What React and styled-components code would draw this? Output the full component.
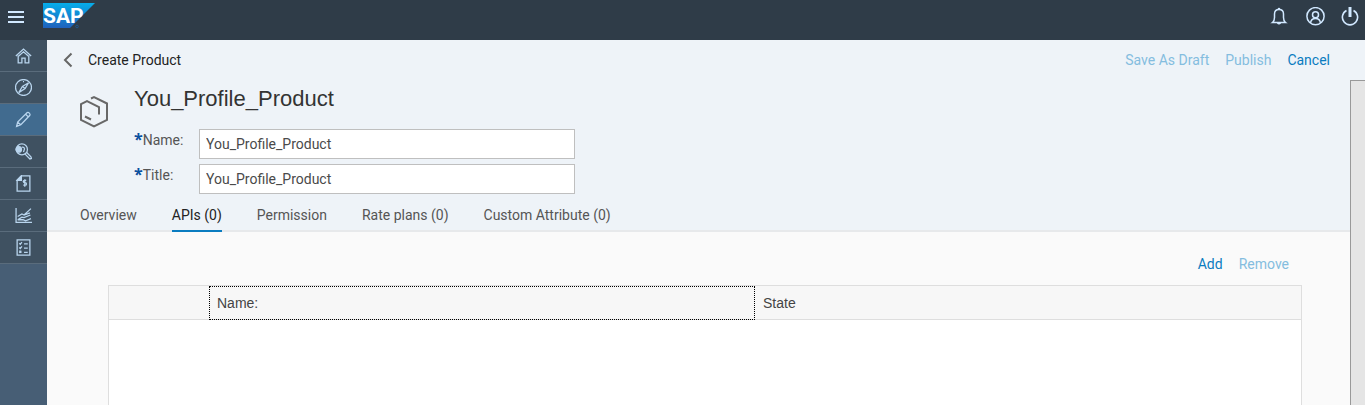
import React, { useState } from "react";
import styled, { createGlobalStyle } from "styled-components";

const GlobalStyle = createGlobalStyle`
  *, *::before, *::after { box-sizing: border-box; }
  body { margin: 0; background: #fafafa; }
  body, button, input { font-family: Roboto, "Liberation Sans", sans-serif; font-size: 14px; }
`;

const Page = styled.div`
  display: flex;
  flex-direction: column;
  min-height: 100vh;
`;

const ShellBar = styled.header`
  display: flex;
  align-items: flex-start;
  height: 40px;
  padding: 3px 6px 0 7px;
  background: #2f3c48;
`;

const ShellActions = styled.div`
  display: flex;
  gap: 16px;
  margin-left: auto;
  padding-top: 4px;
`;

const IconButton = styled.button`
  display: flex;
  padding: 0;
  border: 0;
  background: none;
  color: ${(p) => p.$color || "#d1e8ff"};
  cursor: pointer;
`;

const MenuButton = styled(IconButton)`
  margin: 5px 18px 0 0;
`;

const Icon = styled.svg`
  display: block;
  fill: none;
  stroke: currentColor;
  stroke-width: ${(p) => p.$weight || 1.3};
`;

const Body = styled.div`
  display: flex;
  flex: 1;
`;

const SideNav = styled.nav`
  flex: 0 0 47px;
  background: #475e75;
`;

const NavLink = styled.a`
  display: flex;
  align-items: center;
  justify-content: center;
  height: 32px;
  border-bottom: 1px solid #5a6c7c;
  background: ${(p) => (p.$active ? "#416b8f" : "#3f5161")};
  color: #b9d5ee;
`;

const Main = styled.main`
  display: flex;
  flex: 1;
  flex-direction: column;
  min-width: 0;
`;

const PageBar = styled.div`
  display: flex;
  align-items: center;
  height: 40px;
  padding: 0 35px 0 15px;
  background: #eef3f8;
`;

const PageTitle = styled.span`
  margin-left: 14px;
  color: #222;
`;

const Actions = styled.div`
  display: flex;
  justify-content: flex-end;
  gap: 16px;
  margin-left: auto;
`;

const TextButton = styled.button`
  padding: 0;
  border: 0;
  background: none;
  color: #0a7cc0;
  line-height: 20px;
  &:disabled { color: #84bddf; }
`;

const ScrollArea = styled.div`
  display: flex;
  flex: 1;
`;

const ScrollTrack = styled.div`
  flex: 0 0 15px;
  border: 1px solid #999;
  border-width: 1px 0 0 1px;
  background: #e5e5e5;
`;

const Content = styled.div`
  display: flex;
  flex: 1;
  flex-direction: column;
  min-width: 0;
`;

const ObjectHeader = styled.section`
  background: #eef3f8;
  box-shadow: inset 0 -2px 0 #e7e9eb;
`;

const ObjectSummary = styled.div`
  display: flex;
  gap: 23px;
  padding: 0 32px;
`;

const ObjectIcon = styled.div`
  padding-top: 15px;
  color: #686868;
`;

const ObjectName = styled.h1`
  margin: 4px 0 15px;
  color: #333;
  font: 400 22px/30px "Liberation Sans", Arial, sans-serif;
`;

const FormRow = styled.div`
  display: flex;
  height: 30px;
  margin-top: ${(p) => (p.$first ? "0" : "5px")};
`;

const Label = styled.label`
  width: 65px;
  color: #555;
  line-height: 22px;
`;

const Required = styled.span`
  color: #0a509e;
  font: 700 16px/1 "Open Sans", sans-serif;
`;

const TextInput = styled.input`
  width: 376px;
  padding: 0 6px;
  border: 1px solid #bfbfbf;
  border-radius: 0;
  background: #fff;
  color: #4a4a4a;
`;

const Tabs = styled.div`
  display: flex;
  gap: 35px;
  padding: 0 33px;
`;

const Tab = styled.button`
  height: 38px;
  padding: 6px 0 0;
  border: solid ${(p) => (p.$active ? "#0a7cc0" : "transparent")};
  border-width: 0 0 2px;
  background: none;
  color: ${(p) => (p.$active ? "#222" : "#555")};
`;

const TablePanel = styled.section`
  display: flex;
  flex: 1;
  flex-direction: column;
  padding: 22px 48px 0 61px;
  background: #fafafa;
`;

const Toolbar = styled(Actions)`
  margin: 0 13px 11px auto;
`;

const TableFrame = styled.div`
  flex: 1;
  border: solid #dedede;
  border-width: 1px 1px 0;
  background: #fff;
`;

const Table = styled.table`
  width: 100%;
  border-collapse: separate;
  border-spacing: 0;
  table-layout: fixed;
`;

const HeadCell = styled.th`
  width: ${(p) => p.$width || "auto"};
  height: 34px;
  padding: 0 8px;
  border-bottom: 1px solid #dedede;
  outline: ${(p) => (p.$focused ? "1px dotted #000" : "none")};
  outline-offset: -1px;
  background: #f7f7f7;
  color: #444;
  font: 400 14px/20px "Liberation Sans", Arial, sans-serif;
  text-align: left;
`;

const NAV = [
  { name: "Home", art: <path d="M.8 8.500 8 2l7.200 6.500M3 8v7h3.500v-4.500h3V15H13V8M3.500 8.500 8 4.500l4.500 4" /> },
  { name: "Discover", art: <><circle cx="8" cy="8" r="7.500" /><path d="M12.800 3.500 9.500 9 3.500 12.800 7 7z" /><path d="m7 7 2.500 2M7.500 2.500h1" /></> },
  { name: "Develop", art: <path d="m1.500 14.500 1-4L11.500 1.500q1-.6 2 .5 1.100 1 .5 2L5.500 13zM2.500 10.500l3 2.500M10 3l3 3" /> },
  { name: "Monitor", art: <><circle cx="6.500" cy="6" r="5.200" /><path d="m9.500 10.500 4.500 4.500 1.500-.5-.5-1.500-4-4" /><circle cx="3.500" cy="6" r="2.600" fill="currentColor" /><path d="M6.500 4q2-.5 2.500 1.500l-1 3" /></> },
  { name: "Monetize", art: <><path d="M2 5 6 .8h8v14.400H2z" /><path d="M2 5 6 .8V5z" fill="currentColor" /><path d="M10.600 5H9q-1.200 0-1.200 1.200 0 1 1.200 1h.6q1.200 0 1.200 1.200T9.600 9.600H7.800M9.200 4v7" /></> },
  { name: "Analyze", art: <path d="M1 1v13.500h15M2.500 12l4-2.500 2 .5 6-2.500M2.500 9l4-2.500 2 1L15 1.500M2.500 12h5l2.500 1 5-2M9 7.500l5-2" /> },
  { name: "Tasks", art: <><path d="M2 .8h12v14.400H2z" /><path d="m4 4 1 1 1.500-2M4 8l1 1 1.500-2M4 11l2 2M6 11l-2 2M8.500 4.500H12M8.500 8.500H12M8.500 12.500H12" /></> },
];

const TABS = ["Overview", "APIs (0)", "Permission", "Rate plans (0)", "Custom Attribute (0)"];

function Logo() {
  return (
    <svg width="52" height="26" viewBox="0 0 52 26" role="img" aria-label="SAP">
      <defs>
        <linearGradient id="logoFill" x1="0" y1="0" x2="0" y2="1">
          <stop offset="0" stopColor="#06aeea" />
          <stop offset="1" stopColor="#1f61bc" />
        </linearGradient>
      </defs>
      <path d="M0 0h52L27 25H0z" fill="url(#logoFill)" />
      <text x="0" y="20" fill="#fff" fontSize="21" fontWeight="700" fontFamily="Roboto, sans-serif">SAP</text>
      <circle cx="34" cy="23.500" r="1.300" fill="none" stroke="#1e568c" />
    </svg>
  );
}

function Field({ id, label, first }) {
  const [value, setValue] = useState("You_Profile_Product");
  return (
    <FormRow $first={first}>
      <Label htmlFor={id}><Required>*</Required>{label}</Label>
      <TextInput id={id} value={value} onChange={(e) => setValue(e.target.value)} />
    </FormRow>
  );
}

export default function App() {
  const [tab, setTab] = useState(1);
  return (
    <Page>
      <GlobalStyle />
      <ShellBar>
        <MenuButton aria-label="Menu">
          <Icon width="18" height="18" viewBox="0 0 18 18" $weight={2}><path d="M1 4h16M1 9h16M1 14h16" /></Icon>
        </MenuButton>
        <Logo />
        <ShellActions>
          <IconButton aria-label="Notifications">
            <Icon width="20" height="20" viewBox="0 0 20 20" $weight={1.5}><path d="M3.500 15.500q2-1.500 2-5V7q0-4.500 4.500-4.500T14.500 7v3.500q0 3.500 2 5zM8.500 16q1.500 1.500 3 0M9 2.500Q10 .5 11 2.500" /></Icon>
          </IconButton>
          <IconButton aria-label="Profile">
            <Icon width="20" height="20" viewBox="0 0 20 20" $weight={1.5}><circle cx="10.500" cy="9.200" r="8.600" /><circle cx="10.500" cy="7.800" r="3" /><path d="M5.500 16q.5-4.500 5-4.500t5 4.500" /></Icon>
          </IconButton>
          <IconButton aria-label="Log off">
            <Icon width="18" height="20" viewBox="0 0 18 20" $weight={1.6}><path d="M5.500 3.500a7.600 7.600 0 1 0 7 0" /><path d="M9 0v10" strokeWidth="3" /></Icon>
          </IconButton>
        </ShellActions>
      </ShellBar>
      <Body>
        <SideNav aria-label="Main">
          {NAV.map((item, i) => (
            <NavLink key={item.name} href="#" aria-label={item.name} $active={i === 2}>
              <Icon width="17" height="17" viewBox="0 0 16 16" $weight={1.2}>{item.art}</Icon>
            </NavLink>
          ))}
        </SideNav>
        <Main>
          <PageBar>
            <IconButton aria-label="Back" $color="#666">
              <Icon width="12" height="16" viewBox="0 0 12 16" $weight={2}><path d="M9.500 1.500 3 8l6.500 6.500" /></Icon>
            </IconButton>
            <PageTitle>Create Product</PageTitle>
            <Actions>
              <TextButton disabled>Save As Draft</TextButton>
              <TextButton disabled>Publish</TextButton>
              <TextButton>Cancel</TextButton>
            </Actions>
          </PageBar>
          <ScrollArea>
            <Content>
              <ObjectHeader>
                <ObjectSummary>
                  <ObjectIcon>
                    <Icon width="32" height="34" viewBox="0 0 32 34" $weight={2}>
                      <path d="M12 3.500 15 2.200 28 8.500v16.500L15 31.500 2 25V9l6-3 12 6v7.500M6 21.500l6 3" />
                    </Icon>
                  </ObjectIcon>
                  <div>
                    <ObjectName>You_Profile_Product</ObjectName>
                    <Field id="product-name" label="Name:" first />
                    <Field id="product-title" label="Title:" />
                  </div>
                </ObjectSummary>
                <Tabs role="tablist">
                  {TABS.map((label, i) => (
                    <Tab key={label} role="tab" aria-selected={i === tab} $active={i === tab} onClick={() => setTab(i)}>{label}</Tab>
                  ))}
                </Tabs>
              </ObjectHeader>
              <TablePanel>
                <Toolbar>
                  <TextButton>Add</TextButton>
                  <TextButton disabled>Remove</TextButton>
                </Toolbar>
                <TableFrame>
                  <Table>
                    <thead>
                      <tr>
                        <HeadCell $width="100px" aria-label="Selection" />
                        <HeadCell $focused>Name:</HeadCell>
                        <HeadCell>State</HeadCell>
                      </tr>
                    </thead>
                  </Table>
                </TableFrame>
              </TablePanel>
            </Content>
            <ScrollTrack />
          </ScrollArea>
        </Main>
      </Body>
    </Page>
  );
}
